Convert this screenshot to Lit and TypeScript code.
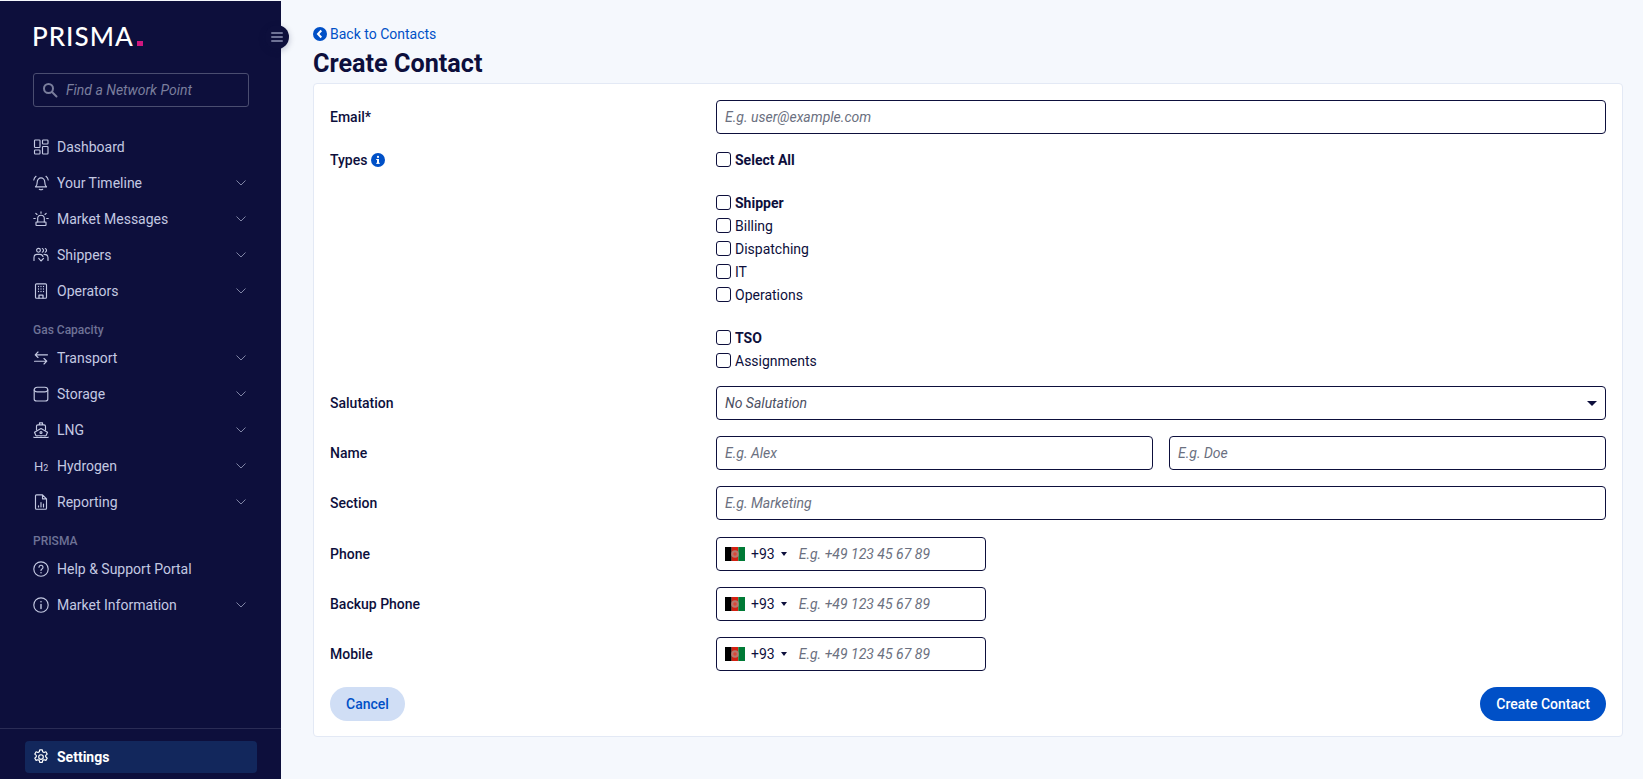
import { LitElement, html, css, svg } from "lit";
import { customElement } from "lit/decorators.js";

const I = (body: unknown, size = 16) => html`<svg class="ic" width=${size} height=${size} viewBox="0 0 16 16" fill="none" stroke="currentColor" stroke-width="1.150" stroke-linecap="round" stroke-linejoin="round">${body}</svg>`;

const icons: Record<string, unknown> = {
  dash: svg`<rect x="1.500" y="1" width="5.500" height="7.500" rx=".8"/><rect x="9.500" y="1" width="5.500" height="4" rx=".8"/><rect x="1.500" y="11" width="5.500" height="4" rx=".8"/><rect x="9.500" y="7.500" width="5.500" height="7.500" rx=".8"/>`,
  bell: svg`<path d="M2.500 11.800c1.200-1 1.700-2.300 1.700-4.600C4.200 4.800 6 2.800 8 2.800s3.800 2 3.800 4.400c0 2.300.5 3.600 1.700 4.600z"/><path d="M6.300 14.300c.9.500 2.500.500 3.400 0M.8 5C1 3.500 1.800 2.300 3 1.300M15.200 5c-.2-1.500-1-2.700-2.200-3.700"/>`,
  alarm: svg`<path d="M4.700 11V7.500a3.300 3.300 0 0 1 6.600 0V11"/><rect x="3" y="11" width="10" height="3.500" rx=".5"/><path d="M8 .8v1.400M2.800 2.300 4 3.500M13.200 2.300 12 3.500M.8 7.500h1.500M13.700 7.500h1.500"/>`,
  people: svg`<circle cx="5.500" cy="3.300" r="1.900"/><path d="M1 13.500v-3C1 8.500 2.500 7.300 4 7.300h3c1.500 0 2.500.8 3 2.200M9.300 1.500a2 2 0 0 1 0 3.700M12.300 1.500a2 2 0 0 1 0 3.700M11 7.300c2.200 0 4 .9 4 3.200v3M5.800 11.300l2.200 2.700 2.500-2.700"/>`,
  building: svg`<rect x="2.500" y=".8" width="11" height="14.400" rx="1"/><path d="M6 15v-2.800h4V15M5.500 3.500h.01M8 3.500h.01M10.500 3.500h.01M5.500 6h.01M8 6h.01M10.500 6h.01M5.500 8.500h.01M8 8.500h.01M10.500 8.500h.01" stroke-width="1.300"/>`,
  transport: svg`<path d="M14.500 4.800H2.300M5 2 2.200 4.800 5 7.500M1.500 11.200h12.200M11 8.500l2.800 2.700L11 14"/>`,
  storage: svg`<path d="M1.200 4c0-1.700 1.500-2.800 3-2.800h7.600c1.500 0 3 1.100 3 2.800v9.300c0 1-1 1.700-2.500 1.700H3.700c-1.500 0-2.500-.7-2.500-1.700z"/><path d="M1.200 4c.5 1.300 1.800 1.900 3 1.900h7.600c1.200 0 2.500-.6 3-1.900"/>`,
  ship: svg`<path d="M6.500 2.800V.8h3v2M3.500 8V4.300c0-.8.500-1.500 1.500-1.500h6c1 0 1.500.7 1.500 1.500V8"/><path d="M1.500 10.200 8 6.500l6.500 3.700-1.500 3.500H3zM.8 15.200c1 .4 2.200.4 3.200 0 1.200.4 2.800.4 4 0 1.200.4 2.800.4 4 0 1 .4 2.200.4 3.200 0"/><circle cx="8" cy="10.500" r="1"/>`,
  report: svg`<path d="M9.500 .8H3.500c-.6 0-1 .4-1 1v12.400c0 .6.4 1 1 1h9c.6 0 1-.4 1-1V4.800zM9.500 .8v4h4"/><path d="M5.500 13v-1.200M8 13V8.500M10.500 13v-3"/>`,
  help: svg`<circle cx="8" cy="8" r="7.200"/><path d="M6 6.200a2 2 0 1 1 3 1.800c-.7.400-1 .8-1 1.500"/><path d="M8 11.700h.01" stroke-width="1.500"/>`,
  info: svg`<circle cx="8" cy="8" r="7.200"/><path d="M8 7.500v4" stroke-width="1.400"/><path d="M8 4.800h.01" stroke-width="1.600"/>`,
  gear: svg`<path d="M6.700 .8h2.600l.4 2 1.300.7 1.900-.7 1.300 2.300-1.500 1.300v1.400l1.500 1.300-1.300 2.300-1.900-.7-1.300.7-.4 2H6.700l-.4-2-1.300-.7-1.900.7-1.300-2.300 1.500-1.300V6.400L1.800 5.100l1.300-2.300 1.900.7 1.300-.7z"/><circle cx="8" cy="8" r="2.300"/>`,
};

type Nav = { kind: "head"; label: string } | { label: string; icon: string; chev?: boolean; kind?: undefined };
const nav: Nav[] = [
  { label: "Dashboard", icon: "dash" },
  { label: "Your Timeline", icon: "bell", chev: true },
  { label: "Market Messages", icon: "alarm", chev: true },
  { label: "Shippers", icon: "people", chev: true },
  { label: "Operators", icon: "building", chev: true },
  { kind: "head", label: "Gas Capacity" },
  { label: "Transport", icon: "transport", chev: true },
  { label: "Storage", icon: "storage", chev: true },
  { label: "LNG", icon: "ship", chev: true },
  { label: "Hydrogen", icon: "h2", chev: true },
  { label: "Reporting", icon: "report", chev: true },
  { kind: "head", label: "PRISMA" },
  { label: "Help & Support Portal", icon: "help" },
  { label: "Market Information", icon: "info", chev: true },
];

const chevron = html`<svg class="chev" width="10" height="6" viewBox="0 0 10 6" fill="none" stroke="currentColor" stroke-width="1"><path d="M.5.500 5 5 9.500.500"/></svg>`;

const flag = html`<svg class="flag" width="20" height="14" viewBox="0 0 20 14"><rect width="6.700" height="14" fill="#000"/><rect x="6.700" width="6.600" height="14" fill="#d32011"/><rect x="13.300" width="6.700" height="14" fill="#007a36"/><circle cx="10" cy="7" r="3.800" fill="#b9786c"/><circle cx="10" cy="7" r="1.800" fill="#d9483a"/></svg>`;

@customElement("app-root")
export class AppRoot extends LitElement {
  static styles = css`
    :host { display: flex; height: 779px; overflow: hidden; background: #f5f8fd; color: #0d0f3c; font-family: Roboto, "Liberation Sans", sans-serif; font-size: 14px; position: relative; }
    * { box-sizing: border-box; }
    .side { width: 281px; height: 778px; margin-top: 1px; flex: none; background: #0d0f3c; display: flex; flex-direction: column; position: relative; color: #c4c9e2; }
    .logo { font-family: Lato, sans-serif; font-size: 26px; font-weight: 500; letter-spacing: 1px; color: #fff; line-height: 24px; margin: 23px 0 0 32px; height: 24px; display: flex; align-items: flex-end; }
    .logo i { width: 6px; height: 5px; margin: 0 0 2px 3px; background: #d0177f; display: block; }
    .toggle { position: absolute; left: 265px; top: 24px; width: 24px; height: 24px; border-radius: 50%; background: #0d0f3c; display: flex; flex-direction: column; gap: 2px; align-items: center; justify-content: center; box-shadow: 0 2px 6px rgba(13,15,60,.25); z-index: 2; }
    .toggle span { width: 12px; height: 2px; background: #6e7296; border-radius: 1px; }
    .search { margin: 25px 0 0 33px; width: 216px; height: 34px; border: 1px solid #4a4d70; border-radius: 3px; display: flex; align-items: center; padding-left: 8px; gap: 8px; color: #7a7e9c; font-style: italic; }
    .nav { margin: 22px 0 0; display: flex; flex-direction: column; padding: 0 33px; }
    .item { height: 36px; display: flex; align-items: center; }
    .item .ic { margin: 0 8px 0 0; flex: none; }
    .h2 { width: 16px; margin-right: 8px; padding-left: 1px; font-size: 13px; white-space: nowrap; }
    .h2 sub { font-size: 9px; vertical-align: baseline; }
    .chev { margin-left: auto; margin-right: 2px; color: #7f84a5; }
    .head { font-size: 12px; font-weight: 500; color: #6e7296; height: 14px; line-height: 14px; }
    .head.g1 { margin-top: 14px; margin-bottom: 3px; }
    .head.g2 { margin-top: 14px; margin-bottom: 3px; }
    .foot { margin-top: auto; border-top: 1px solid #2a2c55; padding: 12px 24px 6px 25px; }
    .settings { height: 32px; background: #12275c; border-radius: 4px; display: flex; align-items: center; padding-left: 8px; color: #fff; font-weight: 700; }
    .settings .ic { margin-right: 8px; }

    .main { flex: 1; min-width: 0; padding: 26px 20px 0 32px; }
    .back { color: #0050c7; display: flex; align-items: center; gap: 3px; height: 16px; line-height: 16px; }
    .title { font-size: 25.200px; font-weight: 700; line-height: 28px; margin: 8px 0 5px; }
    .card { background: #fff; border: 1px solid #e3e9f5; border-radius: 4px; padding: 16px 16px 15px; }
    .row { display: grid; grid-template-columns: 386px 1fr; margin-bottom: 16px; align-items: center; }
    .row.sec { margin-bottom: 17px; }
    .row.types { align-items: start; margin-bottom: 14px; }
    .lab { font-weight: 500; display: flex; align-items: center; gap: 4px; }
    .types .lab { height: 18px; margin-top: 1px; }
    .inp { height: 34px; border: 1px solid #0d0f3c; border-radius: 4px; display: flex; align-items: center; padding: 0 8px; color: #6b7080; font-style: italic; background: #fff; }
    .two { display: grid; grid-template-columns: 1fr 1fr; gap: 16px; }
    .sel { justify-content: space-between; color: #4c5062; }
    .caret { width: 0; height: 0; border-left: 5px solid transparent; border-right: 5px solid transparent; border-top: 5px solid #0d0f3c; }
    .phone { width: 270px; }
    .phone .code { display: flex; align-items: center; font-style: normal; color: #0d0f3c; }
    .flag { margin-right: 6px; }
    .phone .c2 { border-left: 3px solid transparent; border-right: 3px solid transparent; border-top: 4px solid #0d0f3c; margin: 0 11.500px 0 6.500px; }
    .checks { display: flex; flex-direction: column; margin-top: -2px; }
    .ck { height: 23px; display: flex; align-items: center; gap: 4px; }
    .ck b { font-weight: 700; }
    .box { width: 15px; height: 15px; border: 1px solid #0d0f3c; border-radius: 3px; background: #fff; }
    .gap { height: 20px; }
    .btns { display: flex; justify-content: space-between; }
    .btn { height: 34px; border-radius: 17px; display: flex; align-items: center; padding: 0 16px; font-weight: 500; }
    .cancel { background: #d0def5; color: #0050c7; }
    .create { background: #0050c7; color: #fff; }
  `;

  private navItem(n: Nav) {
    if (n.kind === "head") return html`<div class="head ${n.label === "PRISMA" ? "g2" : "g1"}">${n.label}</div>`;
    return html`<div class="item">
      ${n.icon === "h2" ? html`<span class="h2">H<sub>2</sub></span>` : I(icons[n.icon])}
      <span>${n.label}</span>${n.chev ? chevron : ""}
    </div>`;
  }

  private ck(label: string, bold = false) {
    return html`<div class="ck"><span class="box"></span>${bold ? html`<b>${label}</b>` : html`<span>${label}</span>`}</div>`;
  }

  private phone(label: string) {
    return html`<div class="row"><div class="lab">${label}</div>
      <div class="inp phone"><span class="code">${flag}+93<span class="c2"></span></span><span>E.g. +49 123 45 67 89</span></div></div>`;
  }

  render() {
    return html`
      <aside class="side">
        <div class="logo">PRISMA<i></i></div>
        <div class="toggle"><span></span><span></span><span></span></div>
        <div class="search">
          <svg width="16" height="16" viewBox="0 0 16 16" fill="none" stroke="#7a7e9c" stroke-width="2"><circle cx="6.500" cy="6.500" r="4.500"/><path d="m10 10 4.500 4.500" stroke-linecap="round"/></svg>
          <span>Find a Network Point</span>
        </div>
        <nav class="nav">${nav.map((n) => this.navItem(n))}</nav>
        <div class="foot"><div class="settings">${I(icons.gear)}Settings</div></div>
      </aside>
      <main class="main">
        <div class="back">
          <svg width="14" height="14" viewBox="0 0 14 14"><circle cx="7" cy="7" r="7" fill="#0050c7"/><path d="M8.300 3.500 5 7l3.300 3.500" fill="none" stroke="#fff" stroke-width="2"/></svg>
          Back to Contacts
        </div>
        <h1 class="title">Create Contact</h1>
        <section class="card">
          <div class="row"><div class="lab">Email*</div><div class="inp">E.g. user@example.com</div></div>
          <div class="row types">
            <div class="lab">Types
              <svg width="14" height="14" viewBox="0 0 14 14"><circle cx="7" cy="7" r="7" fill="#0050c7"/><rect x="6" y="6" width="2" height="4.500" fill="#fff"/><rect x="5.200" y="9.800" width="3.600" height="1" fill="#fff"/><rect x="5.200" y="6" width="2" height="1" fill="#fff"/><circle cx="7" cy="3.900" r="1.100" fill="#fff"/></svg>
            </div>
            <div class="checks">
              ${this.ck("Select All", true)}
              <div class="gap"></div>
              ${this.ck("Shipper", true)}${this.ck("Billing")}${this.ck("Dispatching")}${this.ck("IT")}${this.ck("Operations")}
              <div class="gap"></div>
              ${this.ck("TSO", true)}${this.ck("Assignments")}
            </div>
          </div>
          <div class="row"><div class="lab">Salutation</div><div class="inp sel">No Salutation<span class="caret"></span></div></div>
          <div class="row"><div class="lab">Name</div><div class="two"><div class="inp">E.g. Alex</div><div class="inp">E.g. Doe</div></div></div>
          <div class="row sec"><div class="lab">Section</div><div class="inp">E.g. Marketing</div></div>
          ${this.phone("Phone")}${this.phone("Backup Phone")}${this.phone("Mobile")}
          <div class="btns"><div class="btn cancel">Cancel</div><div class="btn create">Create Contact</div></div>
        </section>
      </main>
    `;
  }
}
